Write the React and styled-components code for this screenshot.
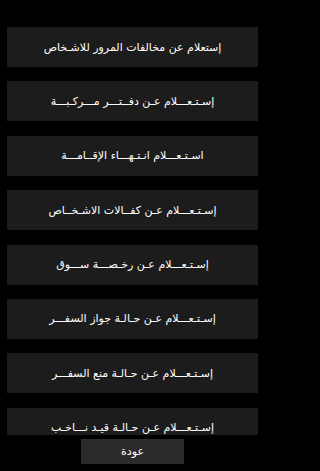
import React from 'react'
import styled, { createGlobalStyle } from 'styled-components'

const GlobalStyle = createGlobalStyle`
  html, body {
    margin: 0;
    padding: 0;
    background: #000000;
  }
`

const Screen = styled.div`
  width: 265px;
  height: 471px;
  display: flex;
  flex-direction: column;
  background: #000000;
  font-family: "DejaVu Sans", "Noto Sans", sans-serif;
`

const MenuList = styled.div`
  height: 435px;
  overflow: hidden;
  display: flex;
  flex-direction: column;
  gap: 14.4px;
  padding: 27px 7px 0 7px;
  box-sizing: border-box;
`

const MenuItem = styled.div`
  flex: 0 0 40px;
  background: #1c1c1c;
  display: flex;
  align-items: center;
  justify-content: center;
  direction: rtl;
  color: #ffffff;
  font-size: 11px;
  white-space: nowrap;
`

const Footer = styled.div`
  flex: 1;
  display: flex;
  justify-content: center;
  padding-top: 4px;
`

const BackButton = styled.button`
  width: 103px;
  height: 25px;
  border: none;
  background: #2b2b2b;
  color: #ffffff;
  font-family: inherit;
  font-size: 11px;
  direction: rtl;
  padding: 0;
`

const items = [
  'إستعلام عن مخالفات المرور للاشـخاص',
  'إسـتـعـــلام عـن دفــتـــر مـــركـبـــة',
  'اسـتـعـــلام انـتـهـــاء الإقــامـــة',
  'إسـتـعـــلام عـن كفــالات الاشـخــاص',
  'إسـتـعـــلام عـن رخـصـــة ســـوق',
  'إسـتـعـــلام عـن حـالـة جواز السفـــر',
  'إسـتـعـــلام عـن حـالـة منع السفـــر',
  'إسـتـعـــلام عـن حـالـة قيـد نـــاخـب',
]

const App = () => {
  return (
    <Screen>
      <GlobalStyle />
      <MenuList>
        {items.map((label) => (
          <MenuItem key={label}>{label}</MenuItem>
        ))}
      </MenuList>
      <Footer>
        <BackButton>عودة</BackButton>
      </Footer>
    </Screen>
  )
}

export default App
